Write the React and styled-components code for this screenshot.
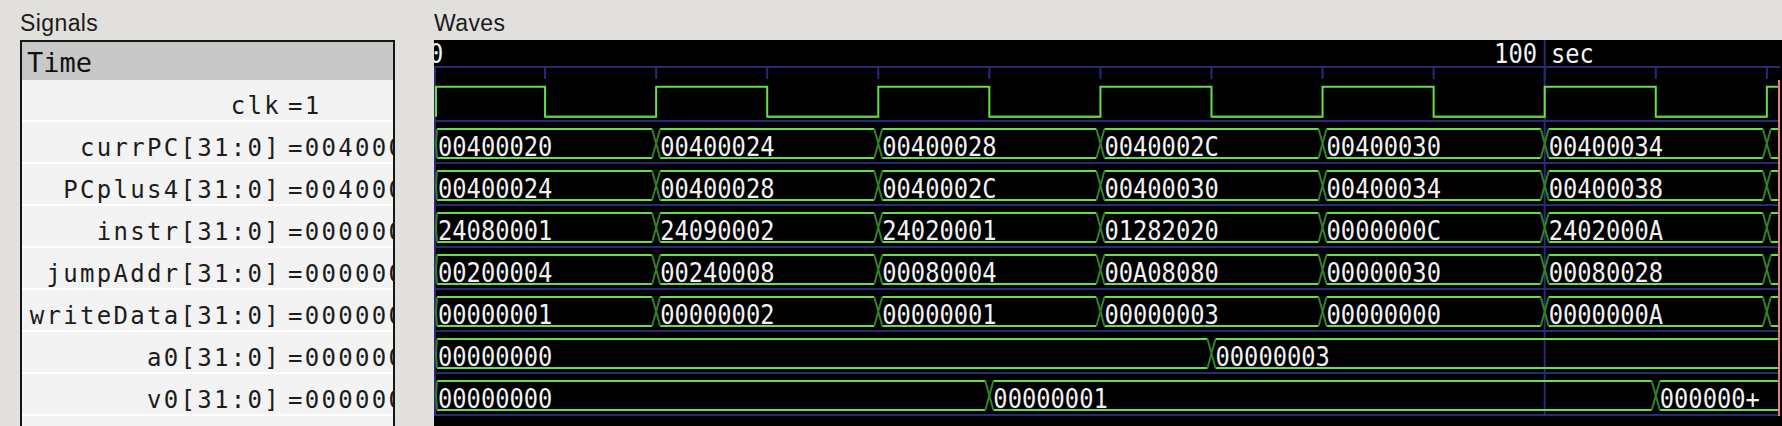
import React from "react";
import styled, { createGlobalStyle } from "styled-components";

// time -> px inside the wave canvas (10 sec per half clock period)
const SCALE = 11.107;
const WAVE_END = 1344;
const CHAR_W = 14.3;
const CURSOR = 1110.7;

const GREEN = "#66e046";
const GREEN_LOW = "#5ccd3f";
const GREEN_X = "#2f8226";
const NAVY = "#292978";
const MARKER = "#e67c7c";

const tx = (t) => t * SCALE;

const signals = [
  { name: "clk", value: "=1" },
  { name: "currPC[31:0]", value: "=00400000" },
  { name: "PCplus4[31:0]", value: "=00400000" },
  { name: "instr[31:0]", value: "=00000000" },
  { name: "jumpAddr[31:0]", value: "=00000000" },
  { name: "writeData[31:0]", value: "=00000000" },
  { name: "a0[31:0]", value: "=00000000" },
  { name: "v0[31:0]", value: "=00000000" },
];

const steps = (values) => values.map((v, i) => [i * 20, v]);

const buses = [
  steps(["00400020", "00400024", "00400028", "0040002C", "00400030", "00400034", ""]),
  steps(["00400024", "00400028", "0040002C", "00400030", "00400034", "00400038", ""]),
  steps(["24080001", "24090002", "24020001", "01282020", "0000000C", "2402000A", ""]),
  steps(["00200004", "00240008", "00080004", "00A08080", "00000030", "00080028", ""]),
  steps(["00000001", "00000002", "00000001", "00000003", "00000000", "0000000A", ""]),
  [
    [0, "00000000"],
    [70, "00000003"],
  ],
  [
    [0, "00000000"],
    [50, "00000001"],
    [110, "000000+"],
  ],
];

function App() {
  return (
    <>
      <GlobalStyle />
      <Page>
        <SignalsColumn>
          <PaneTitle>Signals</PaneTitle>
          <SignalsBox>
            <TimeHeader>Time</TimeHeader>
            {signals.map((s) => (
              <SignalRow key={s.name}>
                <SignalName>{s.name}</SignalName>
                <SignalValue>{s.value}</SignalValue>
              </SignalRow>
            ))}
          </SignalsBox>
        </SignalsColumn>
        <WavesColumn>
          <PaneTitle>Waves</PaneTitle>
          <WavesBox>
            <Ruler />
            <ClockWave />
            {buses.map((changes, i) => (
              <BusWave key={i} changes={changes} />
            ))}
          </WavesBox>
        </WavesColumn>
      </Page>
    </>
  );
}
export default App;

function Label({ x, y, children }) {
  return (
    <WaveText
      x={x}
      y={y}
      textLength={children.length * CHAR_W}
      lengthAdjust="spacingAndGlyphs"
    >
      {children}
    </WaveText>
  );
}

function Ruler() {
  return (
    <WaveSvg $h={28}>
      <line x1={CURSOR} y1={0} x2={CURSOR} y2={28} stroke={NAVY} strokeWidth={2} />
      <line x1={0} y1={27} x2={1346} y2={27} stroke={NAVY} strokeWidth={2} />
      <Label x={-5} y={23.3}>0</Label>
      <Label x={1103 - 3 * CHAR_W} y={23.3}>100</Label>
      <Label x={1117} y={23.3}>sec</Label>
    </WaveSvg>
  );
}

function ClockWave() {
  const h = 54;
  const hi = 18.7;
  const lo = 48.7;
  let d = `M 2 ${lo} V ${hi}`;
  const lows = [];
  for (let k = 1; k <= 12; k++) {
    const x = tx(k * 10);
    d += ` H ${x} V ${k % 2 ? lo : hi}`;
    if (k % 2) lows.push([x, tx((k + 1) * 10)]);
  }
  d += ` H ${WAVE_END}`;
  const ticks = [];
  for (let k = 0; k <= 12; k++) ticks.push(Math.max(1, tx(k * 10)));

  return (
    <WaveSvg $h={h}>
      <line x1={1} y1={0} x2={1} y2={h} stroke={NAVY} strokeWidth={2} />
      <line x1={CURSOR} y1={0} x2={CURSOR} y2={h} stroke={NAVY} strokeWidth={2} />
      {ticks.map((x) => (
        <line key={x} x1={x} y1={0} x2={x} y2={11} stroke={NAVY} strokeWidth={2} />
      ))}
      <line x1={0} y1={53} x2={1346} y2={53} stroke={NAVY} strokeWidth={2} />
      <path d={d} stroke={GREEN} strokeWidth={2} fill="none" />
      {lows.map(([a, b]) => (
        <line key={a} x1={a + 1} y1={lo} x2={b - 1} y2={lo} stroke={GREEN_LOW} strokeWidth={2} />
      ))}
      <line x1={1345} y1={12} x2={1345} y2={h} stroke={MARKER} strokeWidth={2} />
    </WaveSvg>
  );
}

function BusWave({ changes }) {
  const h = 42;
  const top = 7;
  const bot = 36;
  const mid = 21.5;

  return (
    <WaveSvg $h={h}>
      <line x1={1} y1={0} x2={1} y2={h} stroke={NAVY} strokeWidth={2} />
      <line x1={CURSOR} y1={0} x2={CURSOR} y2={h} stroke={NAVY} strokeWidth={2} />
      <line x1={0} y1={41} x2={1346} y2={41} stroke={NAVY} strokeWidth={2} />
      {changes.map(([t, label], i) => {
        const x0 = tx(t);
        const next = changes[i + 1];
        const start = t === 0 ? 3 : x0 + 4;
        const stop = next ? tx(next[0]) - 4 : WAVE_END;
        return (
          <g key={t}>
            <path
              d={`M ${start} ${top} H ${stop} M ${start} ${bot} H ${stop}`}
              stroke={GREEN}
              strokeWidth={2}
              fill="none"
            />
            {t === 0 ? (
              <path
                d={`M ${start} ${top} L 2 ${mid} L ${start} ${bot}`}
                stroke={GREEN_X}
                strokeWidth={2}
                fill="none"
              />
            ) : (
              <path
                d={`M ${x0 - 4} ${top} L ${x0 + 4} ${bot} M ${x0 - 4} ${bot} L ${x0 + 4} ${top}`}
                stroke={GREEN_X}
                strokeWidth={2}
                fill="none"
              />
            )}
            {label && (
              <Label x={x0 + 4} y={33.5}>
                {label}
              </Label>
            )}
          </g>
        );
      })}
      <line x1={1345} y1={0} x2={1345} y2={h} stroke={MARKER} strokeWidth={2} />
    </WaveSvg>
  );
}

const GlobalStyle = createGlobalStyle`
  body {
    margin: 0;
    background: #e2e0dc;
    overflow: hidden;
  }
`;

const Page = styled.div`
  display: flex;
  align-items: flex-start;
  height: 426px;
  padding-left: 20px;
  overflow: hidden;
  background: #e2e0dc;
`;

const SignalsColumn = styled.div`
  flex: none;
  width: 375px;
`;

const WavesColumn = styled.div`
  flex: none;
  width: 1348px;
  margin-left: 39px;
`;

const PaneTitle = styled.div`
  box-sizing: border-box;
  height: 40px;
  padding-top: 12px;
  font-family: "Liberation Sans", Arial, sans-serif;
  font-size: 23px;
  line-height: 23px;
  letter-spacing: 0.4px;
  color: #1a1a1a;
`;

const SignalsBox = styled.div`
  box-sizing: border-box;
  height: 386px;
  border: 2px solid #151515;
  border-bottom: none;
  background: #f3f3f3;
  overflow: hidden;
`;

const TimeHeader = styled.div`
  box-sizing: border-box;
  height: 38px;
  padding: 3px 0 0 5px;
  background: #c8c8c8;
  font-family: "DejaVu Sans Mono", monospace;
  font-size: 27px;
  line-height: 35px;
  color: #111;
  overflow: hidden;
`;

const SignalRow = styled.div`
  box-sizing: border-box;
  display: grid;
  grid-template-columns: 259px 1fr;
  height: 42px;
  padding-top: 14px;
  border-bottom: 2px solid #ffffff;
  font-family: "DejaVu Sans Mono", monospace;
  font-size: 24px;
  line-height: 24px;
  letter-spacing: 2.3px;
  color: #1c1c1c;
  white-space: nowrap;
  overflow: hidden;
`;

const SignalName = styled.span`
  text-align: right;
`;

const SignalValue = styled.span`
  padding-left: 7px;
  overflow: hidden;
`;

const WavesBox = styled.div`
  display: flex;
  flex-direction: column;
  height: 386px;
  background: #000;
  overflow: hidden;
`;

const WaveSvg = styled.svg`
  display: block;
  flex: none;
  width: 1348px;
  height: ${(p) => p.$h}px;
`;

const WaveText = styled.text`
  font-family: "DejaVu Sans Mono", monospace;
  font-size: 27px;
  fill: #f2f2f2;
`;
